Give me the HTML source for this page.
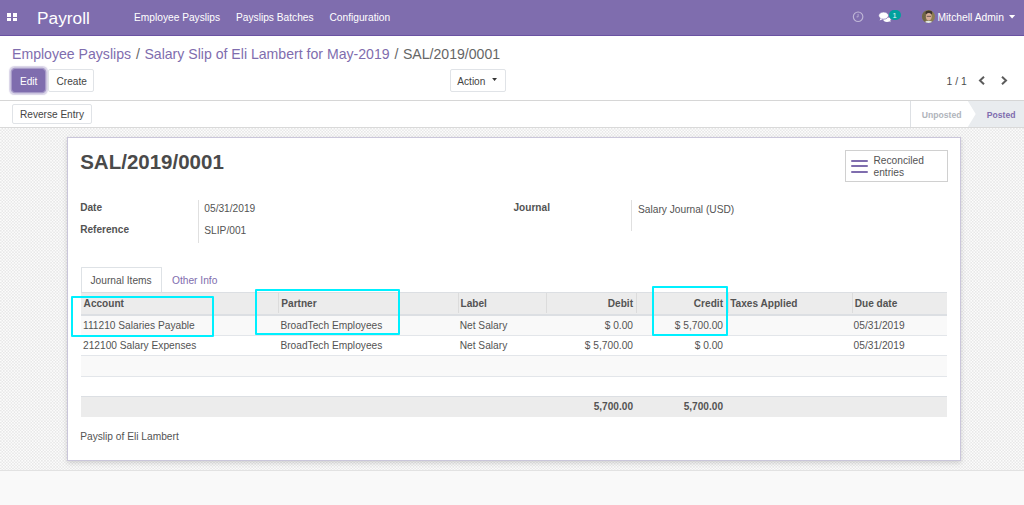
<!DOCTYPE html>
<html><head><meta charset="utf-8">
<style>
*{box-sizing:border-box;margin:0;padding:0}
html,body{width:1024px;height:505px;overflow:hidden;background:#f9f9f9;font-family:"Liberation Sans",sans-serif;color:#535353}
.a{position:absolute}
.t{position:absolute;white-space:nowrap;line-height:1}
#nav{left:0;top:0;width:1024px;height:36px;background:#7F6DAE;border-bottom:1px solid #6a52a2;z-index:2}
.nt{color:#fff;font-size:10.2px}
#cp{left:0;top:35px;width:1024px;height:66px;background:#fff;border-bottom:1px solid #d6d6d6}
.btn{position:absolute;border:1px solid #e0e3e7;border-radius:2px;background:#fff;font-size:10.1px;color:#444}
#sb{left:0;top:101px;width:1024px;height:27px;background:#fff;border-bottom:1px solid #d9d9d9}
#content{left:0;top:128px;width:1024px;height:343px;background-color:#ededed;
 background-image:repeating-conic-gradient(#e8e8e8 0 25%,#fcfcfc 0 50%);background-size:3.05px 3.05px;border-bottom:1px solid #e2e2e2}
#sheet{left:67px;top:137px;width:894px;height:324px;background:#fff;border:1px solid #cac6da;box-shadow:0 2px 5px rgba(0,0,0,.15)}
.lbl{font-weight:bold;font-size:10.1px}
.val{font-size:10.2px}
.cy{position:absolute;border:2px solid #00f0ff;border-radius:1px}
</style></head><body>
<div id="nav" class="a">
  <div class="a" style="left:7px;top:13px;width:4.2px;height:3.6px;background:#fff"></div>
  <div class="a" style="left:12.6px;top:13px;width:4.4px;height:3.6px;background:#fff"></div>
  <div class="a" style="left:7px;top:17.6px;width:4.2px;height:3.4px;background:#fff"></div>
  <div class="a" style="left:12.6px;top:17.6px;width:4.4px;height:3.4px;background:#fff"></div>
  <div class="t" style="left:37px;top:9.7px;font-size:17.3px;color:#fff">Payroll</div>
  <div class="t nt" style="left:134px;top:13px">Employee Payslips</div>
  <div class="t nt" style="left:236px;top:13px">Payslips Batches</div>
  <div class="t nt" style="left:329.5px;top:13px">Configuration</div>
  <!-- clock -->
  <svg class="a" style="left:852px;top:11px" width="12" height="12" viewBox="0 0 12 12"><circle cx="6.1" cy="5.7" r="4.75" fill="none" stroke="rgba(255,255,255,.5)" stroke-width="1.15"/><path d="M6.1 2.9V5.9H4.5" fill="none" stroke="rgba(255,255,255,.45)" stroke-width="0.9"/></svg>
  <!-- chat -->
  <svg class="a" style="left:878px;top:11px" width="14" height="12" viewBox="0 0 14 12"><ellipse cx="9" cy="8.6" rx="3.7" ry="2.3" fill="#fff"/><path d="M10.5 9.5L12.8 11.2L11.6 8.8Z" fill="#fff"/><ellipse cx="5.6" cy="4.6" rx="4.9" ry="3.6" fill="#fff" stroke="#7F6DAE" stroke-width="0.7"/><path d="M2.6 7.2L1.6 9.6L5 8Z" fill="#fff"/></svg>
  <div class="a" style="left:888.5px;top:9.8px;width:12.5px;height:10.5px;border-radius:6px;background:#00A09D"></div>
  <div class="t" style="left:892.6px;top:11.6px;font-size:7.6px;color:#e8f6f5">1</div>
  <!-- avatar -->
  <div class="a" style="left:921.5px;top:10.2px;width:13.2px;height:13.2px;border-radius:50%;overflow:hidden"><svg style="display:block" width="13.2" height="13.2" viewBox="0 0 14 14"><rect width="14" height="14" fill="#8c7d50"/><rect x="0" y="0" width="4" height="14" fill="#6f6545"/><ellipse cx="7.3" cy="3" rx="3.6" ry="2.4" fill="#3d342b"/><ellipse cx="7.2" cy="7" rx="3.1" ry="3.9" fill="#d6ad98"/><rect x="5" y="6.2" width="4.6" height="1" fill="#6a5550"/><ellipse cx="7" cy="14" rx="4" ry="2.6" fill="#dfe6e8"/></svg></div>
  <div class="t nt" style="left:937.5px;top:13px;font-size:10.3px">Mitchell Admin</div>
  <svg class="a" style="left:1009.4px;top:15.2px" width="6.2" height="3.6" viewBox="0 0 7 4"><path d="M0 0H7L3.5 4Z" fill="#fff"/></svg>
</div>

<div id="cp" class="a">
  <div class="t" style="left:12px;top:11.8px;font-size:14.1px;color:#7F6DAE">Employee Payslips <span style="color:#666;margin:0 .7px 0 .9px">/</span> Salary Slip of Eli Lambert for May-2019 <span style="color:#666;margin:0 .7px 0 .9px">/</span> <span style="color:#666">SAL/2019/0001</span></div>
    <div class="btn" style="left:12px;top:34px;width:33px;height:23px;background:#7F6DAE;border-color:#7F6DAE;color:#fff;border-radius:3px;box-shadow:0 0 0 1.3px rgba(127,109,174,.55),0 0 1px 2.2px rgba(127,109,174,.3)"><span class="t" style="left:7px;top:6.5px">Edit</span></div>
  <div class="btn" style="left:48px;top:34px;width:46px;height:23px"><span class="t" style="left:7.5px;top:6.5px">Create</span></div>
  <div class="btn" style="left:450px;top:34px;width:56px;height:23px"><span class="t" style="left:6.3px;top:6.5px">Action</span>
    <svg class="a" style="left:40.5px;top:7.8px" width="5.2" height="3.3" viewBox="0 0 6 4"><path d="M0 0H6L3 3.6Z" fill="#333"/></svg></div>
  <div class="t" style="left:946.5px;top:41.5px;font-size:10.4px;color:#4c4c4c">1 / 1</div>
  <svg class="a" style="left:978.4px;top:41px" width="8" height="9" viewBox="0 0 8 9"><path d="M6 0.8L2 4.5L6 8.2" fill="none" stroke="#5c5c5c" stroke-width="2"/></svg>
  <svg class="a" style="left:999.6px;top:41px" width="8" height="9" viewBox="0 0 8 9"><path d="M2 0.8L6 4.5L2 8.2" fill="none" stroke="#5c5c5c" stroke-width="2"/></svg>
</div>

<div id="sb" class="a">
  <div class="btn" style="left:12px;top:3px;width:80px;height:20px"><span class="t" style="left:7px;top:5px">Reverse Entry</span></div>
  <div class="a" style="left:909.5px;top:0;width:1px;height:26px;background:#dde0e4"></div>
  <svg class="a" style="left:910px;top:0" width="114" height="26" viewBox="0 0 114 26"><path d="M57.8 0H114V26H57.8L65.7 13Z" fill="#e9ecef"/></svg>
  <div class="t" style="left:921.8px;top:9.6px;font-size:8.6px;font-weight:bold;color:#b0b4bb">Unposted</div>
  <div class="t" style="left:986.8px;top:9.6px;font-size:8.6px;font-weight:bold;color:#7F6DAE">Posted</div>
</div>

<div id="content" class="a"></div>
<div id="sheet" class="a"></div>
<div id="sc">
  <div class="t" style="left:80.2px;top:152px;font-size:20.5px;font-weight:bold;color:#4a4a4a">SAL/2019/0001</div>
  <div class="a" style="left:845px;top:150px;width:103px;height:31.5px;border:1px solid #d0d0d0;background:#fff"></div>
  <div class="a" style="left:851.3px;top:159.6px;width:16.4px;height:2.4px;border-radius:1px;background:#7F6DAE"></div>
  <div class="a" style="left:851.3px;top:164.9px;width:16.4px;height:2.4px;border-radius:1px;background:#7F6DAE"></div>
  <div class="a" style="left:851.3px;top:170.5px;width:16.4px;height:2.4px;border-radius:1px;background:#7F6DAE"></div>
  <div class="t val" style="left:873.5px;top:156.2px">Reconciled</div>
  <div class="t val" style="left:873.5px;top:167.8px">entries</div>

  <div class="t lbl" style="left:80.2px;top:203.2px">Date</div>
  <div class="t lbl" style="left:80.2px;top:225.2px">Reference</div>
  <div class="a" style="left:198px;top:199.5px;width:1px;height:43.5px;background:#e0e0e0"></div>
  <div class="t val" style="left:204.3px;top:204.4px">05/31/2019</div>
  <div class="t val" style="left:204.3px;top:226.3px">SLIP/001</div>
  <div class="t lbl" style="left:513.5px;top:203.3px">Journal</div>
  <div class="a" style="left:631px;top:199.5px;width:1px;height:31px;background:#e0e0e0"></div>
  <div class="t val" style="left:638px;top:204.6px">Salary Journal (USD)</div>

  <div class="a" style="left:81px;top:266.8px;width:81px;height:26px;border:1px solid #dee2e6;border-bottom:none;border-radius:1px 1px 0 0;background:#fff"></div>
  <div class="t val" style="left:90.5px;top:275.9px">Journal Items</div>
  <div class="t val" style="left:172px;top:275.9px;color:#7F6DAE">Other Info</div>

  <div class="a" style="left:81px;top:292px;width:866px;height:23.5px;background:#ececec;border-top:1px solid #dcdfe3;border-bottom:2px solid #dcdfe3"></div>
  <div class="a" style="left:278px;top:293px;width:1px;height:20px;background:#dcdcdc"></div>
  <div class="a" style="left:457.5px;top:293px;width:1px;height:20px;background:#dcdcdc"></div>
  <div class="a" style="left:546px;top:293px;width:1px;height:20px;background:#dcdcdc"></div>
  <div class="a" style="left:635.8px;top:293px;width:1px;height:20px;background:#dcdcdc"></div>
  <div class="a" style="left:727.5px;top:293px;width:1px;height:20px;background:#dcdcdc"></div>
  <div class="a" style="left:851.5px;top:293px;width:1px;height:20px;background:#dcdcdc"></div>
  <div class="t lbl" style="left:83.6px;top:298.6px">Account</div>
  <div class="t lbl" style="left:281.3px;top:298.6px">Partner</div>
  <div class="t lbl" style="left:460.5px;top:298.6px">Label</div>
  <div class="t lbl" style="right:391px;top:298.6px">Debit</div>
  <div class="t lbl" style="right:301px;top:298.6px">Credit</div>
  <div class="t lbl" style="left:730.2px;top:298.6px">Taxes Applied</div>
  <div class="t lbl" style="left:854.7px;top:298.6px">Due date</div>

  <div class="a" style="left:81px;top:315.5px;width:866px;height:20px;background:#f9f9f9;border-bottom:1px solid #e3e6ea"></div>
  <div class="a" style="left:81px;top:335.5px;width:866px;height:20.3px;background:#fff;border-bottom:1px solid #e3e6ea"></div>
  <div class="a" style="left:81px;top:355.8px;width:866px;height:21.4px;background:#f9f9f9;border-bottom:1px solid #e3e6ea"></div>
  <div class="a" style="left:81px;top:377.2px;width:866px;height:18.9px;background:#fff"></div>
  <div class="a" style="left:81px;top:396px;width:866px;height:20.5px;background:#ececec;border-top:1px solid #dcdfe3"></div>

  <div class="t val" style="left:83px;top:320.9px">111210 Salaries Payable</div>
  <div class="t val" style="left:280.4px;top:320.9px">BroadTech Employees</div>
  <div class="t val" style="left:459.7px;top:320.9px">Net Salary</div>
  <div class="t val" style="right:391px;top:320.9px">$ 0.00</div>
  <div class="t val" style="right:301px;top:320.9px">$ 5,700.00</div>
  <div class="t val" style="left:853.6px;top:320.9px">05/31/2019</div>
  <div class="t val" style="left:83px;top:341.3px">212100 Salary Expenses</div>
  <div class="t val" style="left:280.4px;top:341.3px">BroadTech Employees</div>
  <div class="t val" style="left:459.7px;top:341.3px">Net Salary</div>
  <div class="t val" style="right:391px;top:341.3px">$ 5,700.00</div>
  <div class="t val" style="right:301px;top:341.3px">$ 0.00</div>
  <div class="t val" style="left:853.6px;top:341.3px">05/31/2019</div>
  <div class="t lbl" style="right:391px;top:402.2px">5,700.00</div>
  <div class="t lbl" style="right:301px;top:402.2px">5,700.00</div>

  <div class="t val" style="left:80.2px;top:431.6px">Payslip of Eli Lambert</div>

  <div class="cy" style="left:71px;top:295.6px;width:143px;height:41.4px"></div>
  <div class="cy" style="left:255.4px;top:289px;width:144.5px;height:45.8px"></div>
  <div class="cy" style="left:652.3px;top:285.8px;width:76.2px;height:49.8px"></div>
</div>


</body></html>
